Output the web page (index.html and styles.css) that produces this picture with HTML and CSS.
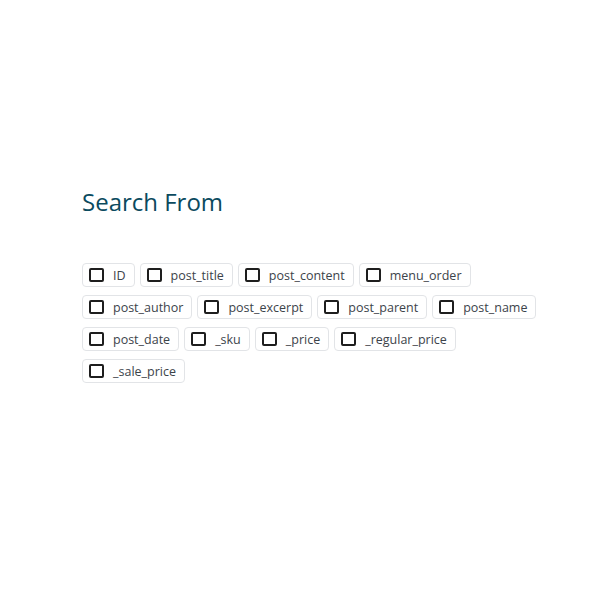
FILE: index.html
```html
<!DOCTYPE html>
<html lang="en">
<head>
<meta charset="utf-8">
<title>Search From</title>
<link rel="stylesheet" href="styles.css">
</head>
<body>
<div class="page">
  <h2 class="title">Search From</h2>
  <div class="fields">
    <label class="chip"><input type="checkbox" class="box"><span>ID</span></label>
    <label class="chip"><input type="checkbox" class="box"><span>post_title</span></label>
    <label class="chip"><input type="checkbox" class="box"><span>post_content</span></label>
    <label class="chip"><input type="checkbox" class="box"><span>menu_order</span></label>
    <label class="chip"><input type="checkbox" class="box"><span>post_author</span></label>
    <label class="chip"><input type="checkbox" class="box"><span>post_excerpt</span></label>
    <label class="chip"><input type="checkbox" class="box"><span>post_parent</span></label>
    <label class="chip"><input type="checkbox" class="box"><span>post_name</span></label>
    <label class="chip"><input type="checkbox" class="box"><span>post_date</span></label>
    <label class="chip"><input type="checkbox" class="box"><span>_sku</span></label>
    <label class="chip"><input type="checkbox" class="box"><span>_price</span></label>
    <label class="chip"><input type="checkbox" class="box"><span>_regular_price</span></label>
    <label class="chip"><input type="checkbox" class="box"><span>_sale_price</span></label>
  </div>
</div>
</body>
</html>
```
FILE: styles.css
```css
html, body {
  margin: 0;
  padding: 0;
  background: #ffffff;
}
.page {
  padding: 187px 0 0 82px;
  width: 462px;
  font-family: "Open Sans", "Noto Sans", sans-serif;
}
.title {
  margin: 0 0 47px 0;
  font-size: 24px;
  line-height: 29px;
  font-weight: 500;
  color: #0b4a5e;
}
.fields {
  display: flex;
  flex-wrap: wrap;
  column-gap: 5px;
  row-gap: 8px;
}
.chip {
  display: inline-flex;
  align-items: center;
  gap: 9px;
  height: 24px;
  box-sizing: border-box;
  padding: 0 8px 0 6px;
  border: 1px solid #e2e4e7;
  border-radius: 4px;
  font-size: 12.5px;
  color: #3c434a;
  background: #fff;
}
.box {
  appearance: none;
  -webkit-appearance: none;
  margin: 0;
  width: 15px;
  height: 14px;
  box-sizing: border-box;
  border: 2px solid #1e1e1e;
  border-radius: 2px;
  background: #fff;
}
```
